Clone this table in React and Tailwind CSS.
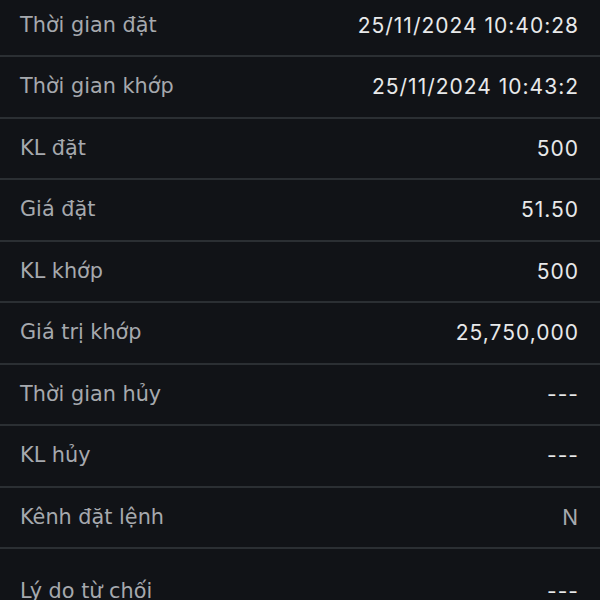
export default function App() {
  const rows = [
    ["Thời gian đặt", "25/11/2024 10:40:28"],
    ["Thời gian khớp", "25/11/2024 10:43:2"],
    ["KL đặt", "500"],
    ["Giá đặt", "51.50"],
    ["KL khớp", "500"],
    ["Giá trị khớp", "25,750,000"],
    ["Thời gian hủy", "---"],
    ["KL hủy", "---"],
    ["Kênh đặt lệnh", "N", true],
  ];
  return (
    <div className="w-[600px] h-[600px] overflow-hidden bg-[#111317]">
      <div className="flex flex-col -mt-[4.5px]">
        {rows.map(([k, v, dim]) => (
          <div
            key={k}
            className="h-[61.5px] flex items-center justify-between pl-[20px] pr-[21px] border-b-2 border-[#2b2f33]"
          >
            <span className="text-[20.8px] text-[#a6a9ae] font-['DejaVu_Sans',sans-serif]">{k}</span>
            <span className={(dim ? "text-[#a6a9ae]" : "text-[#e8e9ea]") + " text-[21px] tracking-[1px] font-['Inter',sans-serif]"}>{v}</span>
          </div>
        ))}
        <div className="h-[86px] flex items-center justify-between pl-[20px] pr-[21px]">
          <span className="text-[20.8px] text-[#a6a9ae] font-['DejaVu_Sans',sans-serif]">Lý do từ chối</span>
          <span className="text-[21px] tracking-[1px] text-[#e8e9ea] font-['Inter',sans-serif]">---</span>
        </div>
      </div>
    </div>
  );
}
